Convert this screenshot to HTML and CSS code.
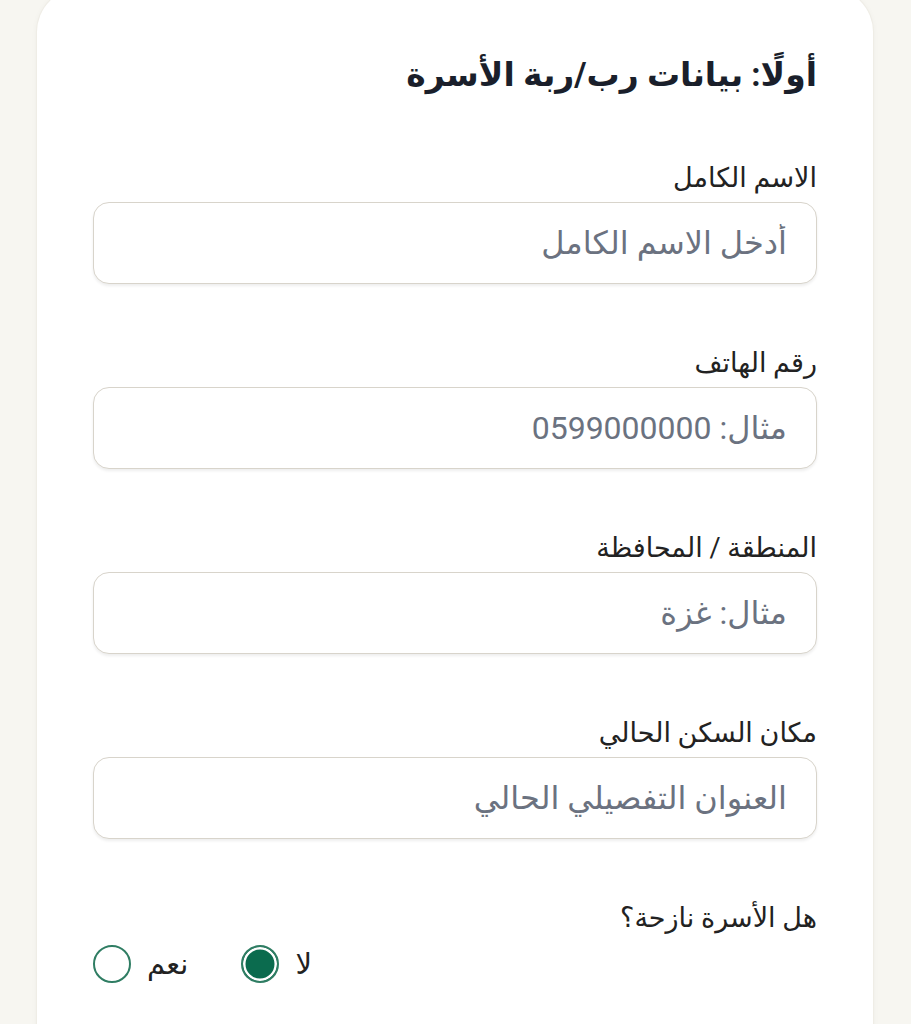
FILE: index.html
```html
<!DOCTYPE html>
<html lang="ar" dir="rtl">
  <head>
    <meta charset="UTF-8" />
    <meta name="viewport" content="width=device-width, initial-scale=1.0" />
    <title>بيانات الأسرة</title>
    <link rel="stylesheet" href="styles.css">
  </head>
  <body>
    <div class="card">
      <h2 class="section-title">أولًا: بيانات رب/ربة الأسرة</h2>

      <div class="field">
        <label class="field-label" for="name">الاسم الكامل</label>
        <input class="field-input" id="name" type="text" placeholder="أدخل الاسم الكامل" />
      </div>

      <div class="field">
        <label class="field-label" for="phone">رقم الهاتف</label>
        <input class="field-input" id="phone" type="tel" placeholder="مثال: 0599000000" />
      </div>

      <div class="field">
        <label class="field-label" for="region">المنطقة / المحافظة</label>
        <input class="field-input" id="region" type="text" placeholder="مثال: غزة" />
      </div>

      <div class="field">
        <label class="field-label" for="address">مكان السكن الحالي</label>
        <input class="field-input" id="address" type="text" placeholder="العنوان التفصيلي الحالي" />
      </div>

      <div class="field">
        <span class="field-label">هل الأسرة نازحة؟</span>
        <div class="radio-group">
          <label class="radio-item">
            <input type="radio" name="displaced" value="yes" />
            <span>نعم</span>
          </label>
          <label class="radio-item">
            <input type="radio" name="displaced" value="no" checked />
            <span>لا</span>
          </label>
        </div>
      </div>
    </div>
  </body>
</html>
```
FILE: styles.css
```css
* {
  box-sizing: border-box;
}
body {
  margin: 0;
  background: #f7f6f1;
  font-family: Roboto, "DejaVu Sans", sans-serif;
  color: #1f2430;
}
.card {
  margin: -12px 38px 0 37px;
  padding: 65px 56px 40px;
  min-height: 1100px;
  background: #fff;
  border-radius: 44px;
  box-shadow: 0 0 0 1px #efede6, 0 1px 6px rgba(0, 0, 0, 0.05);
}
.section-title {
  margin: 0 0 64px;
  font-size: 33px;
  line-height: 44px;
  font-weight: bold;
  color: #1a1f2b;
}
.field {
  margin-bottom: 62px;
}
.field-label {
  display: block;
  margin-bottom: 7px;
  font-size: 27px;
  line-height: 34px;
  color: #222;
}
.field-input {
  display: block;
  width: 100%;
  height: 82px;
  padding: 0 29px;
  border: 1.5px solid #d8d4cb;
  border-radius: 16px;
  background: #fff;
  box-shadow: 0 2px 3px rgba(0, 0, 0, 0.07);
  font-family: inherit;
  font-size: 32px;
  color: #1f2430;
  direction: rtl;
  text-align: right;
  outline: none;
}
.field-input::placeholder {
  color: #6b7280;
}
.radio-group {
  direction: ltr;
  display: flex;
  align-items: center;
  margin-top: 10px;
}
.radio-item {
  display: flex;
  align-items: center;
  gap: 16px;
  margin-right: 53px;
  font-size: 29px;
  color: #222;
}
.radio-item input {
  appearance: none;
  margin: 0;
  width: 38px;
  height: 38px;
  border: 2.5px solid #2f7d63;
  border-radius: 50%;
  background: #fff;
}
.radio-item input:checked {
  background: #0b6b4e;
  box-shadow: inset 0 0 0 2.5px #fff;
}
```
